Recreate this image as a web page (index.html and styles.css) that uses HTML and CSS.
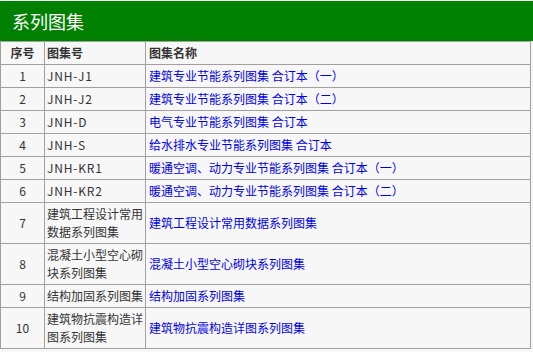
FILE: index.html
```html
<!DOCTYPE html>
<html lang="zh-CN">
<head>
<meta charset="utf-8">
<link rel="stylesheet" href="styles.css">
</head>
<body>
<div class="title">系列图集</div>
<table class="atlas">
  <colgroup>
    <col class="c-no">
    <col class="c-code">
    <col class="c-name">
  </colgroup>
  <thead>
    <tr><th class="num">序号</th><th>图集号</th><th>图集名称</th></tr>
  </thead>
  <tbody>
    <tr><td class="num">1</td><td class="code">JNH-J1</td><td><a href="#">建筑专业节能系列图集 合订本（一）</a></td></tr>
    <tr><td class="num">2</td><td class="code">JNH-J2</td><td><a href="#">建筑专业节能系列图集 合订本（二）</a></td></tr>
    <tr><td class="num">3</td><td class="code">JNH-D</td><td><a href="#">电气专业节能系列图集 合订本</a></td></tr>
    <tr><td class="num">4</td><td class="code">JNH-S</td><td><a href="#">给水排水专业节能系列图集 合订本</a></td></tr>
    <tr><td class="num">5</td><td class="code">JNH-KR1</td><td><a href="#">暖通空调、动力专业节能系列图集 合订本（一）</a></td></tr>
    <tr><td class="num">6</td><td class="code">JNH-KR2</td><td><a href="#">暖通空调、动力专业节能系列图集 合订本（二）</a></td></tr>
    <tr><td class="num">7</td><td>建筑工程设计常用数据系列图集</td><td><a href="#">建筑工程设计常用数据系列图集</a></td></tr>
    <tr><td class="num">8</td><td>混凝土小型空心砌块系列图集</td><td><a href="#">混凝土小型空心砌块系列图集</a></td></tr>
    <tr><td class="num">9</td><td>结构加固系列图集</td><td><a href="#">结构加固系列图集</a></td></tr>
    <tr><td class="num">10</td><td>建筑物抗震构造详图系列图集</td><td><a href="#">建筑物抗震构造详图系列图集</a></td></tr>
  </tbody>
</table>
</body>
</html>
```
FILE: styles.css
```css
html, body {
  margin: 0;
  padding: 0;
  background: #f7f7f7;
}
body {
  padding-top: 1px;
  font-family: "Noto Sans CJK SC", "Noto Sans", sans-serif;
  font-size: 12px;
  color: #333333;
}
.title {
  height: 40px;
  line-height: 40px;
  background: #008000;
  color: #ffffff;
  font-size: 18px;
  padding-left: 12px;
}
.atlas {
  width: 531px;
  border-collapse: collapse;
  table-layout: fixed;
}
.c-no { width: 44px; }
.c-code { width: 101px; }
.atlas th,
.atlas td {
  border: 1px solid #a0a0a0;
  padding: 2px 2px 2px 2px;
  line-height: 18px;
  text-align: left;
  vertical-align: middle;
}
.atlas th {
  font-weight: bold;
  color: #333333;
}
.atlas th.num,
.atlas td.num {
  text-align: center;
}
.atlas td.code {
  letter-spacing: 0.8px;
}
.atlas td:nth-child(3),
.atlas th:nth-child(3) {
  padding-left: 3px;
}
.atlas a {
  color: #0000ee;
  text-decoration: none;
}
```
